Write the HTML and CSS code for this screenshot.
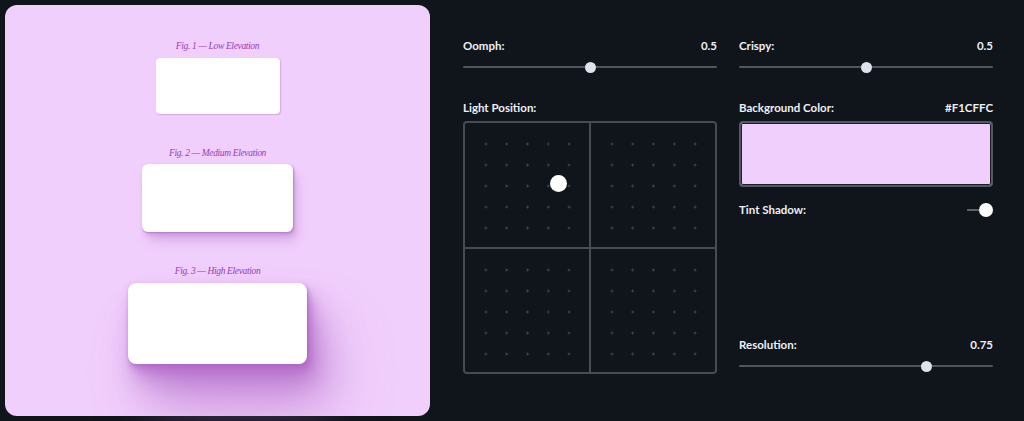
FILE: index.html
```html
<!DOCTYPE html>
<html>
<head>
    <title>Shadow Palette</title>
    <link rel="stylesheet" href="styles.css">
</head>
<body>
    <div class="page">
        <div class="preview">
            <div class="figure">
                <p class="caption">Fig. 1 — Low Elevation</p>
                <div class="card card-low"></div>
            </div>
            <div class="figure">
                <p class="caption">Fig. 2 — Medium Elevation</p>
                <div class="card card-medium"></div>
            </div>
            <div class="figure">
                <p class="caption">Fig. 3 — High Elevation</p>
                <div class="card card-high"></div>
            </div>
        </div>

        <div class="controls">
            <div class="column">
                <div class="field">
                    <div class="label-row"><span>Oomph:</span><span>0.5</span></div>
                    <input class="slider" type="range" min="0" max="1" step="0.05" value="0.5">
                </div>
                <div class="field spaced">
                    <div class="label-row"><span>Light Position:</span></div>
                    <div class="light-box">
                        <div class="quadrant"></div>
                        <div class="quadrant"></div>
                        <div class="quadrant"></div>
                        <div class="quadrant"></div>
                        <span class="light-handle"></span>
                    </div>
                </div>
            </div>

            <div class="column">
                <div class="field">
                    <div class="label-row"><span>Crispy:</span><span>0.5</span></div>
                    <input class="slider" type="range" min="0" max="1" step="0.05" value="0.5">
                </div>
                <div class="field spaced">
                    <div class="label-row"><span>Background Color:</span><span>#F1CFFC</span></div>
                    <div class="swatch"></div>
                </div>
                <div class="label-row tint-row">
                    <span>Tint Shadow:</span>
                    <span class="toggle"><span class="toggle-knob"></span></span>
                </div>
                <div class="field bottom">
                    <div class="label-row"><span>Resolution:</span><span>0.75</span></div>
                    <input class="slider" type="range" min="0" max="1" step="0.05" value="0.75">
                </div>
            </div>
        </div>
    </div>
</body>
</html>
```

FILE: styles.css
```css
body {
    margin: 0;
    background-color: #10141b;
    font-family: Lato, "Open Sans", sans-serif;
    color: #eef0f4;
}
.page {
    display: flex;
    padding: 5px;
    height: 411px;
}
/* Left preview panel */
.preview {
    width: 425px;
    flex-shrink: 0;
    background-color: #f1cffc;
    border-radius: 12px;
    display: flex;
    flex-direction: column;
    align-items: center;
    gap: 33px;
    padding-top: 35px;
    box-sizing: border-box;
}
.figure {
    display: flex;
    flex-direction: column;
    align-items: center;
}
.caption {
    margin: 0 0 5.5px 0;
    font-family: "Liberation Serif", serif;
    font-style: italic;
    font-size: 9.5px;
    letter-spacing: -0.35px;
    line-height: 12px;
    color: #9440b4;
}
.card {
    background-color: #fff;
}
.card-low {
    width: 124px;
    height: 56px;
    border-radius: 4px;
    box-shadow:
        0.3px 0.5px 0.7px hsl(286deg 40% 62% / 0.34),
        0.4px 0.8px 1px -1.2px hsl(286deg 40% 62% / 0.34),
        1px 2px 2.5px -2.5px hsl(286deg 40% 62% / 0.34);
}
.card-medium {
    width: 151px;
    height: 68px;
    border-radius: 6px;
    box-shadow:
        0.3px 0.5px 0.7px hsl(286deg 40% 60% / 0.4),
        0.8px 1.6px 2px -0.8px hsl(286deg 40% 60% / 0.4),
        2.1px 4.1px 5.2px -1.7px hsl(286deg 40% 60% / 0.4),
        5px 10px 12.6px -2.5px hsl(286deg 40% 60% / 0.4);
}
.card-high {
    width: 179px;
    height: 81px;
    border-radius: 8px;
    box-shadow:
        0.3px 0.5px 0.7px hsl(286deg 45% 58% / 0.34),
        1.5px 2.9px 3.7px -0.4px hsl(286deg 45% 58% / 0.34),
        2.7px 5.4px 6.8px -0.7px hsl(286deg 45% 58% / 0.34),
        4.5px 8.9px 11.2px -1.1px hsl(286deg 45% 58% / 0.34),
        7.1px 14.3px 18px -1.4px hsl(286deg 45% 58% / 0.34),
        11.2px 22.3px 28.1px -1.8px hsl(286deg 45% 58% / 0.34),
        17px 33.9px 42.7px -2.1px hsl(286deg 45% 58% / 0.34),
        25px 50px 62.9px -2.5px hsl(286deg 45% 58% / 0.34);
}
/* Right control panel */
.controls {
    display: grid;
    grid-template-columns: 254px 254px;
    column-gap: 22px;
    margin-left: 33px;
    padding-top: 33px;
    height: 336px;
}
.column {
    display: flex;
    flex-direction: column;
}
.field {
    display: flex;
    flex-direction: column;
}
.field.spaced {
    margin-top: 27px;
}
.field.bottom {
    margin-top: auto;
    padding-bottom: 2px;
}
.label-row {
    display: flex;
    justify-content: space-between;
    align-items: center;
    font-size: 11.5px;
    font-weight: 700;
    line-height: 16px;
    height: 16px;
}
.slider {
    -webkit-appearance: none;
    appearance: none;
    width: 100%;
    height: 12px;
    margin: 7px 0 0 0;
    padding: 0;
    background: transparent;
}
.slider::-webkit-slider-runnable-track {
    height: 2px;
    background-color: #50555e;
    border-radius: 1px;
}
.slider::-webkit-slider-thumb {
    -webkit-appearance: none;
    width: 11px;
    height: 11px;
    margin-top: -4.5px;
    border-radius: 50%;
    background-color: #dde3ec;
    border: none;
}
.light-box {
    position: relative;
    margin-top: 5px;
    height: 253px;
    border: 2px solid #464c55;
    border-radius: 4px;
    box-sizing: border-box;
    display: grid;
    grid-template-columns: 1fr 1fr;
    grid-template-rows: 1fr 1fr;
}
.quadrant {
    background-image: radial-gradient(circle, #3d434d 1px, transparent 1.4px);
    background-size: 20.8px 21px;
    background-position: 10.5px 10.5px;
    background-repeat: repeat;
    background-clip: content-box;
    padding: 10px 11px 11px 11px;
}
.quadrant:nth-child(1) {
    border-right: 1px solid #464c55;
    border-bottom: 1px solid #464c55;
}
.quadrant:nth-child(2) {
    border-left: 1px solid #464c55;
    border-bottom: 1px solid #464c55;
}
.quadrant:nth-child(3) {
    border-right: 1px solid #464c55;
    border-top: 1px solid #464c55;
}
.quadrant:nth-child(4) {
    border-left: 1px solid #464c55;
    border-top: 1px solid #464c55;
}
.light-handle {
    position: absolute;
    left: 85px;
    top: 52px;
    width: 17px;
    height: 17px;
    border-radius: 50%;
    background-color: #fff;
}
.swatch {
    margin-top: 5px;
    height: 66px;
    border: 2px solid #535964;
    border-radius: 4px;
    box-sizing: border-box;
    background-color: #f1cffc;
    box-shadow: inset 0 0 0 1px #1a1e26;
}
.tint-row {
    margin-top: 15px;
}
.toggle {
    display: flex;
    align-items: center;
    width: 26px;
    height: 16px;
}
.toggle::before {
    content: "";
    width: 12px;
    height: 2px;
    background-color: #5a606a;
}
.toggle-knob {
    width: 14px;
    height: 14px;
    border-radius: 50%;
    background-color: #fff;
}
```
